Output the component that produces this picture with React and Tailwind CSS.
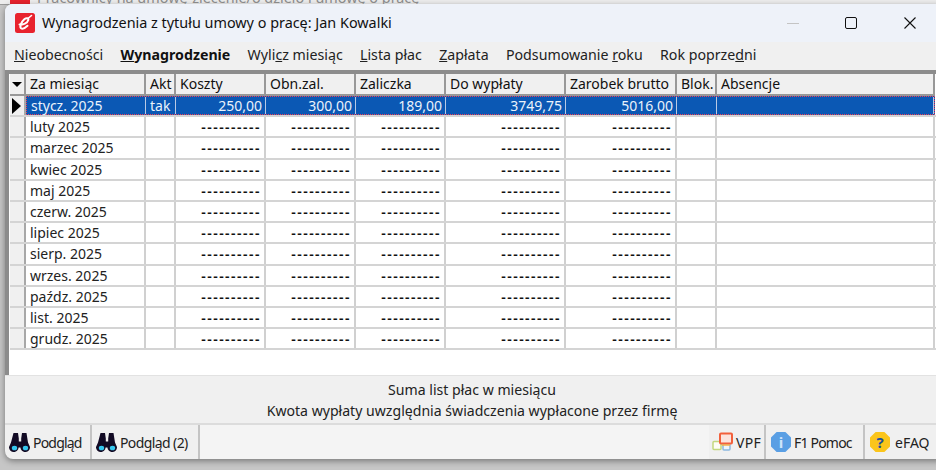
const FONT = "font-['Noto_Sans','Open_Sans',sans-serif]";

const MONTHS = [
  "luty 2025", "marzec 2025", "kwiec 2025", "maj 2025", "czerw. 2025", "lipiec 2025",
  "sierp. 2025", "wrzes. 2025", "paźdz. 2025", "list. 2025", "grudz. 2025",
];

const GRID = "grid grid-cols-[16px_120px_30px_90px_90px_90px_120px_111px_40px_218px]";
const DASH = "----------";

const AppLogo = ({ size = 20 }) => (
  <svg width={size} height={size} viewBox="0 0 20 20" className="shrink-0">
    <rect width="20" height="20" rx="2.500" fill="#e8232e" />
    <path d="M4.500 11.500c3.500.8 8-1.400 8.800-4.400.5-2-1.800-2.600-3.700-1C7 8.400 4 13.400 6 15.200c1.400 1.200 4.200-.2 6.500-2.400" fill="none" stroke="#fff" strokeWidth="2" strokeLinecap="round" />
    <path d="M13.500 5l3-2.500" stroke="#fff" strokeWidth="1.600" strokeLinecap="round" />
  </svg>
);

const Binoculars = () => (
  <svg width="22" height="20" viewBox="0 0 22 20" className="shrink-0">
    <path d="M4.500 1h4.500l.8 5.500v3h2.400v-3l.8-5.500h4.500l1.500 9.500 2 4.500a4.800 4.800 0 0 1-9.600.5h-1.800a4.800 4.800 0 0 1-9.600-.5l2-4.500z" fill="#120a24" />
    <ellipse cx="5.500" cy="16" rx="2.700" ry="2.300" fill="#35c6ee" />
    <ellipse cx="16.500" cy="16" rx="2.700" ry="2.300" fill="#35c6ee" />
  </svg>
);

const VpfIcon = () => (
  <svg width="23" height="20" viewBox="0 0 23 20" className="shrink-0">
    <rect x="1" y="9.500" width="8" height="8" rx="1" fill="#fdfdf5" stroke="#c4d77e" strokeWidth="1.500" />
    <rect x="11" y="12" width="7" height="6" rx="1" fill="#eef5fb" stroke="#8cb8e0" strokeWidth="1.500" />
    <rect x="8" y="1.500" width="12" height="10" rx="1" fill="#fbe4de" stroke="#f2603c" strokeWidth="2" />
    <path d="M10 13h8" stroke="#f5b04a" strokeWidth="1.500" />
  </svg>
);

const Badge = ({ bg, color, children }) => (
  <span
    className={`${bg} ${color} w-5 h-5 shrink-0 flex items-center justify-center text-[15px] font-bold leading-none [clip-path:polygon(28%_0,72%_0,100%_28%,100%_72%,72%_100%,28%_100%,0_72%,0_28%)]`}
  >
    {children}
  </span>
);

const MenuItem = ({ className = "", children }) => (
  <span className={`whitespace-nowrap ${className}`}>{children}</span>
);

const HeaderCell = ({ children }) => (
  <div className="bg-[#f0f0f0] border-r-2 border-b-2 border-[#989898] pl-1 text-[14px] leading-[20px] text-[#111] whitespace-nowrap overflow-hidden">
    {children}
  </div>
);

const Cell = ({ className = "", children }) => (
  <div className={`border-r-2 border-[#d0d0d0] pl-1 pr-[3px] leading-[19px] whitespace-nowrap overflow-hidden ${className}`}>
    {children}
  </div>
);

const Dashes = () => (
  <Cell className="text-right font-semibold tracking-[1.500px] text-[#111]">{DASH}</Cell>
);

const SelCell = ({ right, children }) => (
  <div className={`border-r border-[#b9c9e4] pl-1 pr-[3px] leading-[17px] text-[#eaf2fb] whitespace-nowrap ${right ? "text-right" : ""}`}>
    {children}
  </div>
);

function MonthRow({ month }) {
  return (
    <div className={`${GRID} h-[21.200px] border-b-2 border-[#d4d4d4] text-[14px] text-[#222]`}>
      <div className="bg-[#f0f0f0] border-r-2 border-[#a8a8a8]" />
      <Cell>{month}</Cell>
      <Cell />
      <Dashes />
      <Dashes />
      <Dashes />
      <Dashes />
      <Dashes />
      <Cell />
      <Cell />
    </div>
  );
}

export default function App() {
  return (
    <div className={`${FONT} w-[936px] h-[470px] overflow-hidden bg-[#c6c6c6] flex flex-col`}>
      {/* okno pod spodem, widać tylko dół paska */}
      <div className="h-[5px] shrink-0 bg-[#ededed] overflow-hidden flex items-end gap-[7px] pl-[10px] border-b border-[#9a9a9a]">
        <div className="w-[20px] h-[5px] bg-[#e8232e] shrink-0" />
        <span className="text-[14.400px] leading-[18px] translate-y-[3px] text-[#8a8a8a] whitespace-nowrap h-[18px] shrink-0">
          Pracownicy na umowę-zlecenie/o dzieło i umowę o pracę
        </span>
      </div>

      <div className="ml-[5px] w-[936px] h-[455px] shrink-0 rounded-tl-lg rounded-bl-lg overflow-hidden bg-[#f0f0f0] flex flex-col shadow-[0_2px_6px_rgba(0,0,0,0.4)] -mt-px">
        {/* pasek tytułu */}
        <div className="h-[38px] shrink-0 bg-[#eef2f9] flex items-center pl-[10px]">
          <AppLogo />
          <span className="ml-[7px] text-[14.400px] text-[#111] whitespace-nowrap">
            Wynagrodzenia z tytułu umowy o pracę: Jan Kowalki
          </span>
          <div className="ml-auto flex items-center w-[160px] shrink-0">
            <div className="w-[12px] h-px bg-[#c4c4c4] ml-[6px]" />
            <div className="w-[12px] h-[12px] border-[1.500px] border-[#111] rounded-[2px] ml-[46px]" />
            <svg width="12" height="12" viewBox="0 0 12 12" className="ml-[47px]">
              <path d="M.5.500l11 11M11.500.500l-11 11" stroke="#111" strokeWidth="1.100" />
            </svg>
          </div>
        </div>

        {/* menu */}
        <div className="h-[28px] shrink-0 flex items-start pt-[3px] gap-[17.300px] pl-[9px] text-[14.200px] leading-[19px] text-[#222]">
          <MenuItem><u>N</u>ieobecności</MenuItem>
          <MenuItem className="font-bold text-[#111]"><u>W</u>ynagrodzenie</MenuItem>
          <MenuItem>Wyli<u>c</u>z miesiąc</MenuItem>
          <MenuItem><u>L</u>ista płac</MenuItem>
          <MenuItem><u>Z</u>apłata</MenuItem>
          <MenuItem>Podsumowanie <u>r</u>oku</MenuItem>
          <MenuItem>Rok poprze<u>d</u>ni</MenuItem>
        </div>

        {/* tabela */}
        <div className="h-[305px] shrink-0 border-l-[4px] border-t-[4px] border-[#8c8c8c] bg-white flex flex-col overflow-hidden pl-px">
          <div className={`${GRID} h-[22px] shrink-0`}>
            <div className="bg-[#f0f0f0] border-r-2 border-b-2 border-[#989898] flex items-center justify-center">
              <div className="w-0 h-0 border-x-[5px] border-x-transparent border-t-[5px] border-t-black" />
            </div>
            <HeaderCell>Za miesiąc</HeaderCell>
            <HeaderCell>Akt</HeaderCell>
            <HeaderCell>Koszty</HeaderCell>
            <HeaderCell>Obn.zal.</HeaderCell>
            <HeaderCell>Zaliczka</HeaderCell>
            <HeaderCell>Do wypłaty</HeaderCell>
            <HeaderCell>Zarobek brutto</HeaderCell>
            <HeaderCell>Blok.</HeaderCell>
            <HeaderCell>Absencje</HeaderCell>
          </div>

          <div className={`${GRID} h-[21.200px] shrink-0 border-b-2 border-[#d4d4d4] text-[14px]`}>
            <div className="bg-[#f0f0f0] border-r-2 border-[#a8a8a8] flex items-center pl-[2px]">
              <div className="w-0 h-0 border-y-[8px] border-y-transparent border-l-[9px] border-l-black" />
            </div>
            <div className="col-span-9 grid grid-cols-subgrid bg-[#0b58b4] border border-dotted border-[#e8405a]">
              <SelCell>stycz. 2025</SelCell>
              <SelCell>tak</SelCell>
              <SelCell right>250,00</SelCell>
              <SelCell right>300,00</SelCell>
              <SelCell right>189,00</SelCell>
              <SelCell right>3749,75</SelCell>
              <SelCell right>5016,00</SelCell>
              <SelCell />
              <SelCell />
            </div>
          </div>

          {MONTHS.map((m) => (
            <MonthRow key={m} month={m} />
          ))}
        </div>

        {/* podsumowanie */}
        <div className="h-[48px] shrink-0 border-t border-[#e2e2e2] flex flex-col items-center pt-[3px] text-[14.100px] leading-[21px] text-[#222] pr-[2px]">
          <span>Suma list płac w miesiącu</span>
          <span>Kwota wypłaty uwzględnia świadczenia wypłacone przez firmę</span>
        </div>

        {/* dolny pasek */}
        <div className="h-[36px] shrink-0 border-t-2 border-[#dcdcdc] flex items-stretch text-[14px] text-[#222]">
          <div className="w-[87px] border-r-2 border-[#c4c4c4] flex items-center gap-[2px] pl-[4px]">
            <Binoculars />
            <span className="tracking-[-0.800px]">Podgląd</span>
          </div>
          <div className="w-[108px] border-r-2 border-[#c4c4c4] flex items-center gap-[2px] pl-[4px]">
            <Binoculars />
            <span className="tracking-[-0.600px]">Podgląd (2)</span>
          </div>
          <div className="flex-1 bg-[#f4f4f4]" />
          <div className="w-[57px] border-r-2 border-[#c4c4c4] flex items-center gap-[1px] pl-[3px]">
            <VpfIcon />
            <span className="tracking-[0.300px]">VPF</span>
          </div>
          <div className="w-[99px] border-r-2 border-[#c4c4c4] flex items-center gap-[3px] pl-[5px]">
            <Badge bg="bg-[#5a9fe4]" color="text-[#cfe4fa]">i</Badge>
            <span className="tracking-[-0.800px]">F1 Pomoc</span>
          </div>
          <div className="w-[76px] flex items-center gap-[5px] pl-[5px]">
            <Badge bg="bg-[#fbc51b]" color="text-[#1c4f9c]">?</Badge>
            <span>eFAQ</span>
          </div>
        </div>
      </div>
    </div>
  );
}
